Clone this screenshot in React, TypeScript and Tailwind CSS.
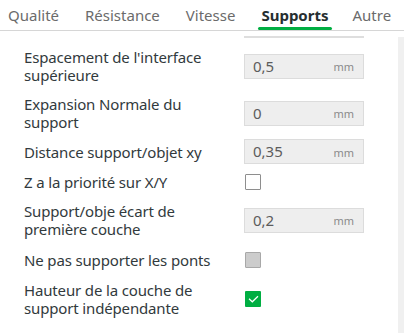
import React from "react";

type Row =
  | { label: string[]; kind: "input"; value: string; mt: string }
  | { label: string[]; kind: "check"; state: "off" | "disabled" | "on"; mt: string };

const rows: Row[] = [
  { label: ["Espacement de l'interface", "supérieure"], kind: "input", value: "0,5", mt: "mt-[10px]" },
  { label: ["Expansion Normale du", "support"], kind: "input", value: "0", mt: "mt-[11px]" },
  { label: ["Distance support/objet xy"], kind: "input", value: "0,35", mt: "mt-[8px]" },
  { label: ["Z a la priorité sur X/Y"], kind: "check", state: "off", mt: "mt-[9px]" },
  { label: ["Support/obje écart de", "première couche"], kind: "input", value: "0,2", mt: "mt-[11px]" },
  { label: ["Ne pas supporter les ponts"], kind: "check", state: "disabled", mt: "mt-[13px]" },
  { label: ["Hauteur de la couche de", "support indépendante"], kind: "check", state: "on", mt: "mt-[12px]" },
];

const tabs = ["Qualité", "Résistance", "Vitesse", "Supports", "Autre"];

function Check({ state }: { state: "off" | "disabled" | "on" }) {
  if (state === "on") {
    return (
      <div className="w-[16px] h-[16px] rounded-[1px] bg-[#00ae42] flex items-center justify-center">
        <svg width="11" height="8" viewBox="0 0 11 8" fill="none">
          <path d="M1 3.8l3.3 3L10 1.2" stroke="#fff" strokeWidth="1.2" />
        </svg>
      </div>
    );
  }
  if (state === "disabled") {
    return <div className="w-[16px] h-[16px] rounded-[1px] bg-[#cccccc] border border-[#a8a8a8]" />;
  }
  return <div className="w-[16px] h-[16px] rounded-[1px] bg-white border border-[#8e8e8e]" />;
}

export default function App() {
  return (
    <div
      className="w-[404px] h-[333px] bg-white overflow-hidden text-[#323a3d]"
      style={{ fontFamily: '"Noto Sans", "Open Sans", sans-serif' }}
    >
      <div className="h-[31px] border-b border-[#d6d6d6] flex items-start pl-[8px] gap-[26px] text-[15px] leading-[18px] pt-[6px]">
        {tabs.map((t) => (
          <div
            key={t}
            className={
              t === "Supports"
                ? "relative font-bold text-[#262e30] h-[24px]"
                : t === "Autre"
                  ? "relative text-[#6b6b6b] h-[24px] -ml-[2px]"
                  : "relative text-[#6b6b6b] h-[24px]"
            }
          >
            {t}
            {t === "Supports" && (
              <div className="absolute left-[-3px] right-[-3px] bottom-0 h-[3px] bg-[#00ae42] rounded-full" />
            )}
          </div>
        ))}
      </div>
      <div className="flex">
        <div className="flex-1 pl-[24px]">
          <div className="ml-[220px] mt-[5px] w-[120px] h-[2px] bg-[#dedede]" />
          {rows.map((r, i) => (
            <div key={i} className={"flex items-center " + r.mt}>
              <div className="w-[220px] text-[15px] leading-[18px] tracking-[-0.15px]">
                {r.label.map((l) => (
                  <div key={l}>{l}</div>
                ))}
              </div>
              {r.kind === "input" ? (
                <div className="w-[120px] h-[25px] bg-[#eeeeee] border border-[#dcdcdc] flex items-center justify-between pl-[8px] pr-[9px]">
                  <span className="text-[15px] text-[#5c5c5c]">{r.value}</span>
                  <span className="text-[11px] text-[#8a8a8a] mt-[3px]">mm</span>
                </div>
              ) : (
                <div className="pl-[1px]">
                  <Check state={r.state} />
                </div>
              )}
            </div>
          ))}
        </div>
        <div className="w-[6px] mt-[6px] h-[300px] bg-[#f0f0f0]" />
      </div>
    </div>
  );
}
